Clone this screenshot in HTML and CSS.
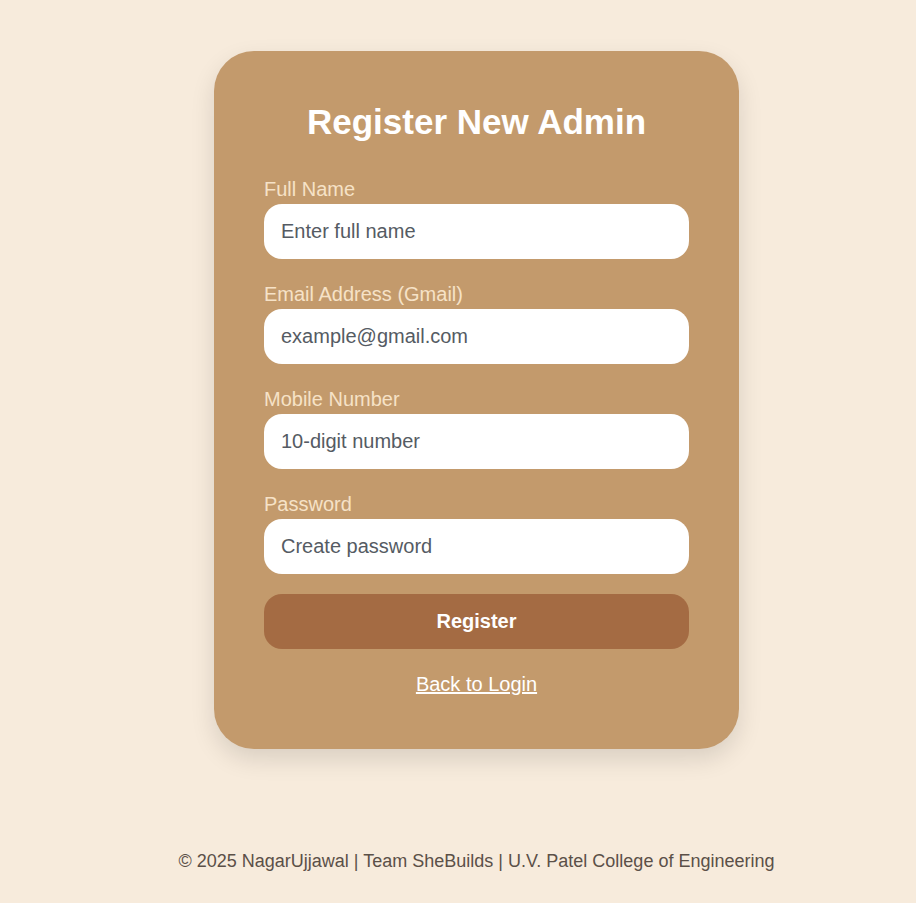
FILE: index.html
```html
<!DOCTYPE html>
<html lang="en">
<head>
<meta charset="UTF-8">
<title>Register New Admin</title>
<link rel="stylesheet" href="styles.css">
</head>
<body>
<main class="page">
  <form class="card">
    <h1 class="title">Register New Admin</h1>
    <div class="field">
      <label class="label">Full Name</label>
      <input class="input" type="text" placeholder="Enter full name">
    </div>
    <div class="field">
      <label class="label">Email Address (Gmail)</label>
      <input class="input" type="email" placeholder="example@gmail.com">
    </div>
    <div class="field">
      <label class="label">Mobile Number</label>
      <input class="input" type="text" placeholder="10-digit number">
    </div>
    <div class="field field-last">
      <label class="label">Password</label>
      <input class="input" type="password" placeholder="Create password">
    </div>
    <button class="btn" type="button">Register</button>
    <a class="back" href="#">Back to Login</a>
  </form>
  <footer class="footer">© 2025 NagarUjjawal | Team SheBuilds | U.V. Patel College of Engineering</footer>
</main>
</body>
</html>
```
FILE: styles.css
```css
* { box-sizing: border-box; }
html, body { margin: 0; padding: 0; }
body {
  background: #f7ebdc;
  font-family: "Liberation Sans", Arial, sans-serif;
  min-height: 903px;
}
.page {
  padding-left: 37px;
  display: flex;
  flex-direction: column;
  align-items: center;
  padding-top: 51px;
}
.card {
  width: 525px;
  background: #c39a6c;
  border-radius: 40px;
  padding: 50px 50px 53px;
  box-shadow: 0 10px 25px rgba(0, 0, 0, 0.12);
  display: flex;
  flex-direction: column;
}
.title {
  margin: 0 0 36px;
  text-align: center;
  color: #ffffff;
  font-size: 35px;
  font-weight: bold;
  line-height: 42px;
}
.field {
  display: flex;
  flex-direction: column;
  margin-bottom: 25px;
}
.field-last { margin-bottom: 20px; }
.label {
  color: #f6e2c7;
  font-size: 20px;
  line-height: 20px;
  margin-bottom: 5px;
}
.input {
  height: 55px;
  border: none;
  border-radius: 18px;
  background: #ffffff;
  padding: 0 17px;
  font-family: "Liberation Sans", Arial, sans-serif;
  font-size: 20px;
  color: #333;
  outline: none;
}
.input::placeholder { color: #555b63; opacity: 1; }
.btn {
  height: 55px;
  border: none;
  border-radius: 18px;
  background: #a46b43;
  color: #ffffff;
  font-family: "Liberation Sans", Arial, sans-serif;
  font-size: 20px;
  font-weight: bold;
  margin-top: 0;
}
.back {
  align-self: center;
  margin-top: 24px;
  color: #ffffff;
  font-size: 20px;
  line-height: 23px;
  text-decoration: underline;
}
.footer {
  margin-top: 102px;
  color: #5b5048;
  font-size: 18px;
  text-align: center;
}
```
